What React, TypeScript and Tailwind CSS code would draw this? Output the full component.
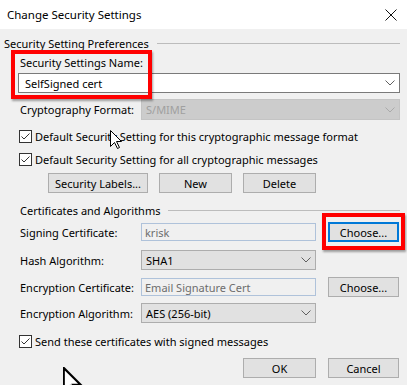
import React from "react";

const font = { fontFamily: '"Segoe UI", "Noto Sans", sans-serif' };

function Chevron({ color = "#606060" }: { color?: string }) {
  return (
    <svg width="10" height="6" viewBox="0 0 10 6" className="shrink-0">
      <path d="M0.5 0.5 L5 5 L9.5 0.5" fill="none" stroke={color} strokeWidth="1" />
    </svg>
  );
}

function Check({ label }: { label: string }) {
  return (
    <div className="flex items-center h-[16px] pl-[19px]">
      <div className="w-[13px] h-[13px] border border-[#333] bg-white flex items-center justify-center shrink-0">
        <svg width="11" height="11" viewBox="0 0 11 11">
          <path d="M1.5 5.5 L4 8 L9.5 2.5" fill="none" stroke="#333" strokeWidth="1" />
        </svg>
      </div>
      <span className="ml-[3px] leading-none whitespace-nowrap">{label}</span>
    </div>
  );
}

function Btn({ children, w, focus }: { children: React.ReactNode; w: string; focus?: boolean }) {
  return (
    <div
      className={`${w} h-[20px] bg-[#e1e1e1] flex items-center justify-center leading-none whitespace-nowrap ${
        focus ? "border-2 border-[#0078d7]" : "border border-[#adadad]"
      }`}
    >
      {children}
    </div>
  );
}

function Cursor({ className, w = 13, h = 20, sw = 1 }: { className: string; w?: number; h?: number; sw?: number }) {
  return (
    <svg width={w} height={h} viewBox="0 0 13 20" className={className}>
      <path
        d="M0.5 0.5 L0.5 16.5 L4.5 12.5 L7.5 18.5 L9.5 17.5 L6.5 11.5 L11.5 11.5 Z"
        fill="white"
        stroke="black"
        strokeWidth={sw}
      />
    </svg>
  );
}

export default function App() {
  return (
    <div className="relative w-[407px] h-[385px] overflow-hidden bg-[#f0f0f0] text-[11px] text-black" style={font}>
      {/* title bar */}
      <div className="h-[29px] bg-white flex items-center justify-between pl-[7px] pr-[10px]">
        <span className="text-[11.5px]">Change Security Settings</span>
        <svg width="12" height="12" viewBox="0 0 12 12">
          <path d="M0.5 0.5 L11.5 11.5 M11.5 0.5 L0.5 11.5" stroke="#111" strokeWidth="1" />
        </svg>
      </div>

      {/* preferences */}
      <div className="mt-[6px] h-[16px] flex items-center pl-[4px] pr-[7px]">
        <span className="leading-none whitespace-nowrap">Security Setting Preferences</span>
        <div className="flex-1 ml-[8px] h-px bg-[#bcbcbc]" />
      </div>
      <div className="mt-[3px] h-[16px] flex items-center pl-[20px] leading-none">Security Settings Name:</div>
      <div className="mt-[3px] ml-[18px] mr-[7px] h-[20px] bg-white border border-[#7a7a7a] flex items-center justify-between pl-[6px] pr-[4px]">
        <span className="leading-none">SelfSigned cert</span>
        <Chevron />
      </div>
      <div className="mt-[6px] h-[21px] flex items-center pl-[20px] pr-[7px]">
        <span className="w-[121px] shrink-0 whitespace-nowrap leading-none">Cryptography Format:</span>
        <div className="flex-1 h-[21px] bg-[#cccccc] border border-[#c4c4c4] flex items-center justify-between pl-[4px] pr-[4px]">
          <span className="leading-none text-[#a0a0a0]">S/MIME</span>
          <Chevron color="#aaaaaa" />
        </div>
      </div>
      <div className="mt-[8px]">
        <Check label="Default Security Setting for this cryptographic message format" />
      </div>
      <div className="mt-[7px]">
        <Check label="Default Security Setting for all cryptographic messages" />
      </div>
      <div className="mt-[6px] flex gap-[11px] pl-[48px]">
        <Btn w="w-[100px]">Security Labels...</Btn>
        <Btn w="w-[73px]">New</Btn>
        <Btn w="w-[73px]">Delete</Btn>
      </div>

      {/* certificates */}
      <div className="mt-[9px] h-[16px] flex items-center pl-[20px] pr-[7px]">
        <span className="leading-none whitespace-nowrap">Certificates and Algorithms</span>
        <div className="flex-1 ml-[8px] h-px bg-[#bcbcbc]" />
      </div>
      <div className="mt-[4px] h-[20px] flex items-center pl-[20px]">
        <span className="w-[121px] shrink-0 whitespace-nowrap leading-none">Signing Certificate:</span>
        <div className="w-[175px] h-[18px] bg-[#f0f0f0] border border-[#afc2da] flex items-center pl-[3px] text-[#6d6d6d] leading-none">
          krisk
        </div>
        <div className="ml-[12px]">
          <Btn w="w-[71px]" focus>
            Choose...
          </Btn>
        </div>
      </div>
      <div className="mt-[8px] h-[20px] flex items-center pl-[20px]">
        <span className="w-[121px] shrink-0 whitespace-nowrap leading-none">Hash Algorithm:</span>
        <div className="w-[175px] h-[20px] bg-[#e1e1e1] border border-[#adadad] flex items-center justify-between pl-[4px] pr-[4px]">
          <span className="leading-none">SHA1</span>
          <Chevron />
        </div>
      </div>
      <div className="mt-[7px] h-[20px] flex items-center pl-[20px]">
        <span className="w-[121px] shrink-0 whitespace-nowrap leading-none">Encryption Certificate:</span>
        <div className="w-[175px] h-[18px] bg-[#f0f0f0] border border-[#afc2da] flex items-center pl-[3px] text-[#6d6d6d] leading-none">
          Email Signature Cert
        </div>
        <div className="ml-[12px]">
          <Btn w="w-[71px]">Choose...</Btn>
        </div>
      </div>
      <div className="mt-[6px] h-[20px] flex items-center pl-[20px]">
        <span className="w-[121px] shrink-0 whitespace-nowrap leading-none">Encryption Algorithm:</span>
        <div className="w-[175px] h-[20px] bg-[#e1e1e1] border border-[#adadad] flex items-center justify-between pl-[4px] pr-[4px]">
          <span className="leading-none">AES (256-bit)</span>
          <Chevron />
        </div>
      </div>
      <div className="mt-[10px]">
        <Check label="Send these certificates with signed messages" />
      </div>
      <div className="mt-[9px] flex justify-end gap-[12px] pr-[8px]">
        <Btn w="w-[73px]">OK</Btn>
        <Btn w="w-[71px]">Cancel</Btn>
      </div>

      {/* annotations */}
      <div className="absolute left-[11px] top-[50px] w-[141px] h-[49px] border-4 border-[#ff0000] shadow-[1px_2px_2px_rgba(0,0,0,0.35)]" />
      <div className="absolute left-[322px] top-[213px] w-[83px] h-[37px] border-4 border-[#ff0000] shadow-[1px_2px_2px_rgba(0,0,0,0.35)]" />
      <Cursor className="absolute left-[110px] top-[130px]" />
      <Cursor className="absolute left-[63px] top-[367px]" w={20} h={31} sw={1.4} />
    </div>
  );
}
